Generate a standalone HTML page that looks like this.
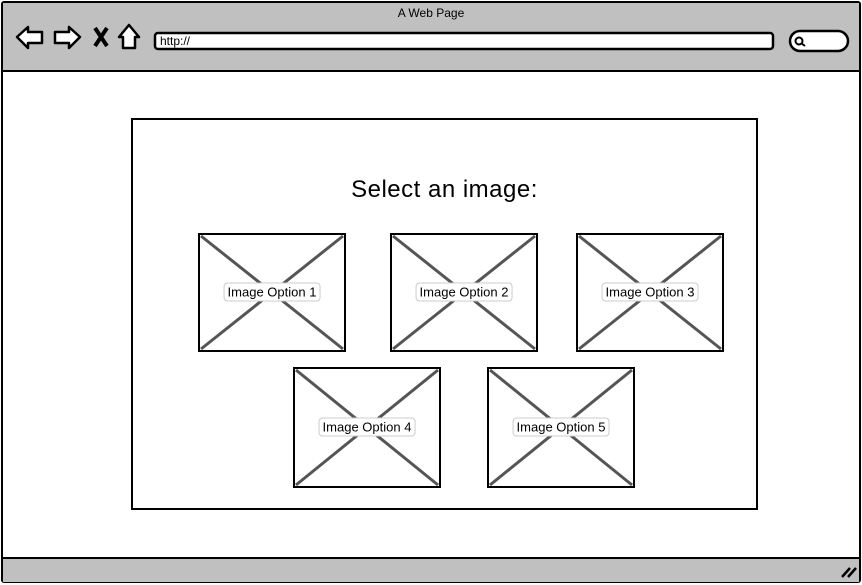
<!DOCTYPE html><html><head><style>
body{margin:0;width:862px;height:585px;position:relative;background:#fff;font-family:"Liberation Sans",sans-serif;overflow:hidden}
.a{position:absolute;box-sizing:border-box}
.lbl{position:absolute;font-size:13px;background:#fff;border:1px solid #ccc;border-radius:4px;padding:1px 3px;transform:translate(-50%,-50%);white-space:nowrap;color:#000}
</style></head><body>
<div class="a" style="left:1px;top:1px;width:860px;height:582px;border:2px solid #000;border-radius:3px"></div>
<div class="a" style="left:3px;top:3px;width:856px;height:69px;background:#c0c0c0;border-bottom:2px solid #000"></div>
<div class="a" style="left:3px;top:557px;width:856px;height:25px;background:#c0c0c0;border-top:2px solid #000"></div>
<div class="a" style="left:0;top:6px;width:862px;text-align:center;font-size:12px">A Web Page</div>
<svg class="a" style="left:0;top:0" width="862" height="585">
<g fill="#fff" stroke="#000" stroke-width="2.5" stroke-linejoin="round">
<path d="M17 37 L28 27 L28 32 L42 32 L42 43 L28 43 L28 48 Z"/>
<path d="M80 37 L69 27 L69 32 L55 32 L55 43 L69 43 L69 48 Z"/>
<path d="M119 37 L129 25 L139 37 L135 37 L135 48 L123 48 L123 37 Z"/>
<rect x="155" y="33" width="618" height="16" rx="3"/>
<rect x="790" y="31" width="58" height="20" rx="10"/>
</g>
<path d="M95 28 L107 46 M107 28 L95 46" stroke="#000" stroke-width="4"/>
<circle cx="799" cy="41" r="3.5" fill="none" stroke="#000" stroke-width="2"/>
<path d="M801 43 L805 46" stroke="#000" stroke-width="2"/>
<path d="M842 577 L850 568 M848 577 L856 568" stroke="#000" stroke-width="2.5"/>
<rect x="132" y="119" width="625" height="390" fill="none" stroke="#000" stroke-width="2"/>
<g fill="#fff" stroke="#000" stroke-width="2">
<rect x="199" y="234" width="146" height="117"/><rect x="391" y="234" width="146" height="117"/><rect x="577" y="234" width="146" height="117"/>
<rect x="294" y="368" width="146" height="119"/><rect x="488" y="368" width="146" height="119"/>
</g>
<g stroke="#555" stroke-width="3">
<path d="M201 236 L343 349 M343 236 L201 349"/>
<path d="M393 236 L535 349 M535 236 L393 349"/>
<path d="M579 236 L721 349 M721 236 L579 349"/>
<path d="M296 370 L438 485 M438 370 L296 485"/>
<path d="M490 370 L632 485 M632 370 L490 485"/>
</g>
</svg>
<div class="a" style="left:155px;top:33px;font-size:12px;padding:1px 5px">http://</div>
<div class="a" style="left:132px;top:176px;width:625px;text-align:center;font-size:24px;letter-spacing:0.5px">Select an image:</div>
<div class="lbl" style="left:272px;top:292px">Image Option 1</div>
<div class="lbl" style="left:464px;top:292px">Image Option 2</div>
<div class="lbl" style="left:650px;top:292px">Image Option 3</div>
<div class="lbl" style="left:367px;top:427px">Image Option 4</div>
<div class="lbl" style="left:561px;top:427px">Image Option 5</div>
</body></html>
